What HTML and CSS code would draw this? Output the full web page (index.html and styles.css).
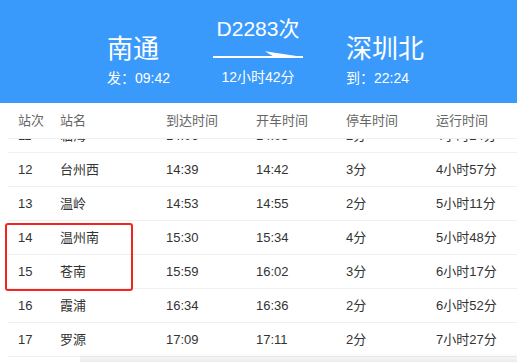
FILE: index.html
```html
<!DOCTYPE html>
<html lang="zh-CN">
<head>
<meta charset="utf-8">
<title>D2283次</title>
<link rel="stylesheet" href="styles.css">
</head>
<body>
<div class="page">
  <header class="hero">
    <div class="stop">
      <div class="stop-name">南通</div>
      <div class="stop-time">发：09:42</div>
    </div>
    <div class="trip">
      <div class="train-no">D2283次</div>
      <svg class="arrow" width="90" height="8" viewBox="0 0 90 8">
        <rect x="0" y="6" width="90" height="2" fill="#fff"/>
        <polygon points="52,1.2 90,7 60,6.2" fill="#fff"/>
      </svg>
      <div class="duration">12小时42分</div>
    </div>
    <div class="stop">
      <div class="stop-name">深圳北</div>
      <div class="stop-time">到：22:24</div>
    </div>
  </header>

  <div class="table">
    <div class="row head">
      <span>站次</span><span>站名</span><span>到达时间</span><span>开车时间</span><span>停车时间</span><span>运行时间</span>
    </div>
    <div class="body">
      <div class="row first"><span>11</span><span>临海</span><span>14:06</span><span>14:08</span><span>2分</span><span>4小时24分</span></div>
      <div class="row"><span>12</span><span>台州西</span><span>14:39</span><span>14:42</span><span>3分</span><span>4小时57分</span></div>
      <div class="row"><span>13</span><span>温岭</span><span>14:53</span><span>14:55</span><span>2分</span><span>5小时11分</span></div>
      <div class="row"><span>14</span><span>温州南</span><span>15:30</span><span>15:34</span><span>4分</span><span>5小时48分</span></div>
      <div class="row"><span>15</span><span>苍南</span><span>15:59</span><span>16:02</span><span>3分</span><span>6小时17分</span></div>
      <div class="row"><span>16</span><span>霞浦</span><span>16:34</span><span>16:36</span><span>2分</span><span>6小时52分</span></div>
      <div class="row"><span>17</span><span>罗源</span><span>17:09</span><span>17:11</span><span>2分</span><span>7小时27分</span></div>
      <div class="row"><span>18</span><span>连江</span><span>17:30</span><span>17:32</span><span>2分</span><span>7小时48分</span></div>
    </div>
  </div>

  <div class="highlight"></div>
  <div class="bottom-shade"></div>
</div>
</body>
</html>
```

FILE: styles.css
```css
* { box-sizing: border-box; }
html, body { margin: 0; padding: 0; background: #fff; }
body {
  font-family: "Liberation Sans", "Noto Sans CJK SC", sans-serif;
  width: 517px;
  height: 362px;
  overflow: hidden;
}
.page {
  position: relative;
  width: 517px;
  height: 362px;
  overflow: hidden;
}
.hero {
  height: 103px;
  background: #3a9afc;
  color: #fff;
  display: flex;
  justify-content: center;
  align-items: flex-start;
  gap: 43px;
  padding-left: 14px;
}
.stop { padding-top: 34px; }
.stop-name {
  font-size: 26px;
  line-height: 30px;
  height: 30px;
}
.stop-time {
  margin-top: 4px;
  font-size: 14px;
  line-height: 20px;
}
.trip {
  width: 90px;
  padding-top: 16px;
  display: flex;
  flex-direction: column;
  align-items: center;
}
.train-no {
  font-size: 21px;
  line-height: 26px;
  height: 26px;
}
.arrow { display: block; margin-top: 8px; }
.duration {
  margin-top: 9px;
  font-size: 14px;
  line-height: 20px;
}
.table {
  margin-left: 8px;
}
.row {
  display: grid;
  grid-template-columns: 42px 106px 90px 90px 90px 1fr;
  padding-left: 10px;
  height: 34px;
  align-items: center;
  border-bottom: 1px solid #efefef;
  font-size: 13px;
  line-height: 16px;
  color: #333;
}
.row.head {
  position: relative;
  z-index: 2;
  background: #fff;
  height: 36px;
  padding-top: 1px;
  color: #666;
}
.body {
  height: 223px;
  overflow: hidden;
}
.row.first { margin-top: -20px; }
.highlight {
  position: absolute;
  left: 5px;
  top: 223px;
  width: 128px;
  height: 68px;
  border: 2px solid #f2261c;
  border-radius: 3px;
}
.bottom-shade {
  position: absolute;
  left: 80px;
  right: 0;
  bottom: 0;
  height: 9px;
  background: linear-gradient(to bottom, rgba(0,0,0,0), rgba(0,0,0,0.08));
}
```
